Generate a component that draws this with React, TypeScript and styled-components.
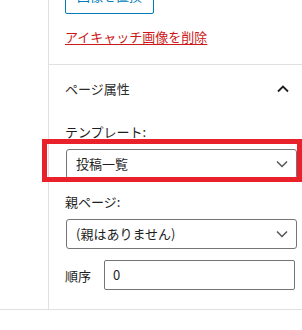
import React from "react";
import styled, { createGlobalStyle } from "styled-components";

const GlobalStyle = createGlobalStyle`
  html, body {
    margin: 0;
    padding: 0;
    background: #fff;
    overflow: hidden;
  }
  body {
    font-family: "Noto Sans CJK JP", "Noto Sans", sans-serif;
    font-size: 13px;
    color: #1e1e1e;
  }
`;

const Frame = styled.div`
  display: flex;
  border-bottom: 1px solid #e0e0e0;
  margin-top: -22px;
`;

const Gutter = styled.div`
  width: 48px;
  flex: none;
`;

const Sidebar = styled.div`
  flex: 1;
  border-left: 1px solid #e0e0e0;
  min-width: 0;
`;

const Section = styled.div`
  padding: 0 16px 18px;
  border-bottom: 1px solid #e0e0e0;
  display: flex;
  flex-direction: column;
  align-items: flex-start;
`;

const OutlineButton = styled.button`
  height: 36px;
  padding: 0 11px;
  border: 1px solid #007cba;
  border-radius: 2px;
  background: #fff;
  color: #007cba;
  font: inherit;
  font-size: 13px;
  line-height: 18px;
`;

const DangerLink = styled.a`
  margin-top: 14px;
  color: #cc1818;
  text-decoration: underline;
  text-underline-offset: 2px;
  line-height: 18px;
  cursor: pointer;
`;

const PanelHeader = styled.div`
  height: 48px;
  padding: 0 13px 0 16px;
  display: flex;
  align-items: center;
  justify-content: space-between;
  color: #2c2c2c;
  line-height: 18px;
`;

const PanelBody = styled.div`
  padding: 10px 5px 19px 16px;
  display: flex;
  flex-direction: column;
`;

const FieldLabel = styled.label<{ $gap?: number }>`
  display: block;
  line-height: 18px;
  margin-top: ${(p) => p.$gap ?? 0}px;
  margin-bottom: 8px;
`;

const SelectWrap = styled.div`
  position: relative;
  margin-left: 1px;
`;

const Select = styled.div`
  height: 30px;
  box-sizing: border-box;
  border: 1px solid #757575;
  border-radius: 3px;
  padding: 0 8px 0 9px;
  display: flex;
  align-items: center;
  justify-content: space-between;
  line-height: 18px;
  background: #fff;
`;

const Highlight = styled.div`
  position: absolute;
  left: -24px;
  top: -10px;
  right: -5px;
  bottom: -3px;
  border: 5px solid #e8212b;
  pointer-events: none;
`;

const OrderRow = styled.div`
  display: flex;
  align-items: center;
  gap: 13px;
  margin-top: 11px;
  padding-right: 2px;
`;

const OrderInput = styled.div`
  flex: 1;
  height: 30px;
  box-sizing: border-box;
  border: 1px solid #757575;
  border-radius: 2px;
  padding: 0 8px;
  display: flex;
  align-items: center;
  line-height: 18px;
`;

const Chevron = ({ up }: { up?: boolean }) => (
  <svg width="12" height="8" viewBox="0 0 12 8" fill="none">
    <path
      d={up ? "M1 6.5 L6 1.5 L11 6.5" : "M1 1.5 L6 6.5 L11 1.5"}
      stroke={up ? "#1e1e1e" : "#555"}
      strokeWidth={up ? 1.8 : 1.5}
    />
  </svg>
);

export default function App() {
  return (
    <>
      <GlobalStyle />
      <Frame>
        <Gutter />
        <Sidebar>
          <Section>
            <OutlineButton>画像を置換</OutlineButton>
            <DangerLink>アイキャッチ画像を削除</DangerLink>
          </Section>
          <PanelHeader>
            <span>ページ属性</span>
            <Chevron up />
          </PanelHeader>
          <PanelBody>
            <FieldLabel>テンプレート:</FieldLabel>
            <SelectWrap>
              <Select>
                <span>投稿一覧</span>
                <Chevron />
              </Select>
              <Highlight />
            </SelectWrap>
            <FieldLabel $gap={14}>親ページ:</FieldLabel>
            <SelectWrap>
              <Select>
                <span>(親はありません)</span>
                <Chevron />
              </Select>
            </SelectWrap>
            <OrderRow>
              <span>順序</span>
              <OrderInput>0</OrderInput>
            </OrderRow>
          </PanelBody>
        </Sidebar>
      </Frame>
    </>
  );
}
